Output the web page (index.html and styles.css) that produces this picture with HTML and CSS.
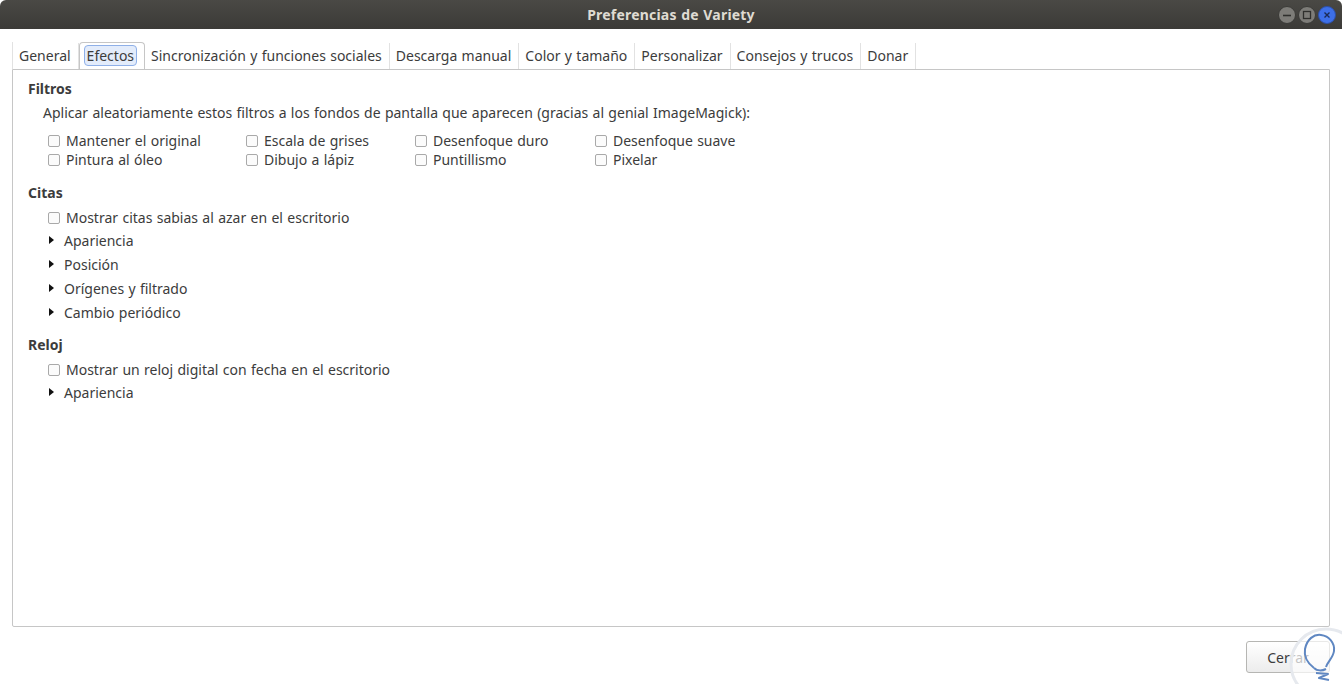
FILE: index.html
```html
<!DOCTYPE html>
<html>
<head>
    <title>Preferencias de Variety</title>
    <link rel="stylesheet" href="styles.css">
</head>

<body>
    <div class="window">
        <div class="titlebar">
            <span class="title">Preferencias de Variety</span>
            <div class="controls">
                <span class="ctl"><svg width="16" height="16" viewBox="0 0 16 16"><path d="M4 8.5h8" stroke="#2f2f2d" stroke-width="1.6"/></svg></span>
                <span class="ctl"><svg width="16" height="16" viewBox="0 0 16 16"><rect x="4.5" y="4.5" width="7" height="7" fill="none" stroke="#2f2f2d" stroke-width="1.3"/></svg></span>
                <span class="ctl close"><svg width="16" height="16" viewBox="0 0 16 16"><path d="M5.5 5.5l5 5M10.5 5.5l-5 5" stroke="#1b2a55" stroke-width="1.4"/></svg></span>
            </div>
        </div>

        <div class="tabs">
            <div class="tab">General</div>
            <div class="tab active"><span class="focus">Efectos</span></div>
            <div class="tab">Sincronización y funciones sociales</div>
            <div class="tab">Descarga manual</div>
            <div class="tab">Color y tamaño</div>
            <div class="tab">Personalizar</div>
            <div class="tab">Consejos y trucos</div>
            <div class="tab">Donar</div>
        </div>

        <div class="frame">
            <div class="section">
                <div class="heading">Filtros</div>
                <div class="desc">Aplicar aleatoriamente estos filtros a los fondos de pantalla que aparecen (gracias al genial ImageMagick):</div>
                <div class="filters">
                    <label class="check"><span class="box"></span>Mantener el original</label>
                    <label class="check"><span class="box"></span>Escala de grises</label>
                    <label class="check"><span class="box"></span>Desenfoque duro</label>
                    <label class="check"><span class="box"></span>Desenfoque suave</label>
                    <label class="check"><span class="box"></span>Pintura al óleo</label>
                    <label class="check"><span class="box"></span>Dibujo a lápiz</label>
                    <label class="check"><span class="box"></span>Puntillismo</label>
                    <label class="check"><span class="box"></span>Pixelar</label>
                </div>
            </div>

            <div class="section">
                <div class="heading">Citas</div>
                <label class="check row"><span class="box"></span>Mostrar citas sabias al azar en el escritorio</label>
                <div class="expander"><span class="arrow"></span>Apariencia</div>
                <div class="expander"><span class="arrow"></span>Posición</div>
                <div class="expander"><span class="arrow"></span>Orígenes y filtrado</div>
                <div class="expander"><span class="arrow"></span>Cambio periódico</div>
            </div>

            <div class="section">
                <div class="heading">Reloj</div>
                <label class="check row"><span class="box"></span>Mostrar un reloj digital con fecha en el escritorio</label>
                <div class="expander"><span class="arrow"></span>Apariencia</div>
            </div>
        </div>

        <div class="footer">
            <button class="button">Cerrar</button>
            <svg class="watermark" width="80" height="80" viewBox="0 0 80 80">
                <circle cx="40" cy="40" r="35" fill="rgba(255,255,255,0.7)" stroke="#e6e9ee" stroke-width="3"/>
                <path d="M28 44C20 38 18 31 19 25C21 15 28 10 35 11C43 12 49 19 48 27C47 34 42 37 40 43" fill="none" stroke="#5f87c2" stroke-width="2"/>
                <path d="M28 44C31 47 36 47 40 45M30 49L42 50L33 54L43 56" fill="none" stroke="#5f87c2" stroke-width="2" stroke-linejoin="round"/>
            </svg>
        </div>
    </div>
</body>

</html>
```

FILE: styles.css
```css
body {
    margin: 0;
    font-family: "Noto Sans", "DejaVu Sans", sans-serif;
    font-size: 14px;
    word-spacing: 0.7px;
    color: #3c3c3c;
    background: #ffffff;
}

.window {
    width: 1342px;
    height: 684px;
    display: flex;
    flex-direction: column;
    overflow: hidden;
}

.titlebar {
    height: 29px;
    flex: none;
    background: linear-gradient(#4a4945, #3b3a37);
    border-radius: 6px 6px 0 0;
    display: flex;
    align-items: center;
    justify-content: center;
    position: relative;
}

.title {
    color: #dfdbd2;
    font-weight: bold;
    font-size: 14px;
    letter-spacing: 0.2px;
}

.controls {
    position: absolute;
    right: 6px;
    top: 6px;
    display: flex;
    gap: 2px;
}

.ctl {
    width: 18px;
    height: 18px;
    border-radius: 50%;
    background: #7d7c78;
    border: 1px solid #3a3a37;
    display: flex;
    align-items: center;
    justify-content: center;
    box-sizing: border-box;
}

.close {
    background: #3d6fe8;
    border-color: #2d4fa8;
}

.tabs {
    display: flex;
    margin: 13px 0 0 12px;
    height: 27px;
    border-left: 1px solid #e2e2e2;
}

.tab {
    padding: 0 7px 0 6px;
    line-height: 25px;
    border-right: 1px solid #e2e2e2;
    white-space: nowrap;
    margin-top: 1px;
    height: 26px;
}

.tab.active {
    border: 1px solid #c6c6c6;
    border-bottom: none;
    border-radius: 4px 4px 0 0;
    margin-top: 0;
    height: 27px;
    padding: 0 7px 1px 4px;
    box-sizing: border-box;
    display: flex;
    align-items: center;
    background: #ffffff;
}

.focus {
    border: 1px solid #8fb0e8;
    background: #e3ecfb;
    border-radius: 4px;
    padding: 0 2px;
    line-height: 19px;
}

.frame {
    margin: 0 12px 0 12px;
    height: 558px;
    border: 1px solid #c6c6c6;
    border-radius: 0 0 2px 2px;
    padding: 10px 15px;
    box-sizing: border-box;
    flex: none;
}

.section {
    margin-bottom: 12px;
}

.heading {
    font-weight: bold;
    line-height: 18px;
    margin-bottom: 6px;
}

.desc {
    margin-left: 15px;
    line-height: 18px;
    margin-bottom: 10px;
}

.filters {
    margin-left: 20px;
    padding-bottom: 3px;
    display: grid;
    grid-template-columns: 198px 169px 180px 200px;
    row-gap: 1px;
}

.check {
    display: flex;
    align-items: center;
    line-height: 18px;
    white-space: nowrap;
}

.check.row {
    margin: 7px 0 1px 20px;
}

.box {
    width: 10px;
    height: 10px;
    border: 1px solid #a9a9a9;
    border-radius: 2px;
    background: #fbfbfb;
    margin-right: 6px;
    flex: none;
}

.expander {
    display: flex;
    align-items: center;
    margin-left: 20px;
    height: 24px;
}

.arrow {
    width: 0;
    height: 0;
    border-top: 4.5px solid transparent;
    border-bottom: 4.5px solid transparent;
    border-left: 5px solid #111111;
    margin: 0 10px 0 1px;
}

.footer {
    flex: 1;
    display: flex;
    justify-content: flex-end;
    align-items: flex-start;
    padding: 14px 12px 0 0;
    position: relative;
}

.button {
    font-family: inherit;
    font-size: 14px;
    color: #3c3c3c;
    width: 84px;
    height: 32px;
    border: 1px solid #b6b6b3;
    border-radius: 3px;
    background: linear-gradient(#ffffff, #ececec);
}

.watermark {
    position: absolute;
    right: -24px;
    top: -3px;
}
```
